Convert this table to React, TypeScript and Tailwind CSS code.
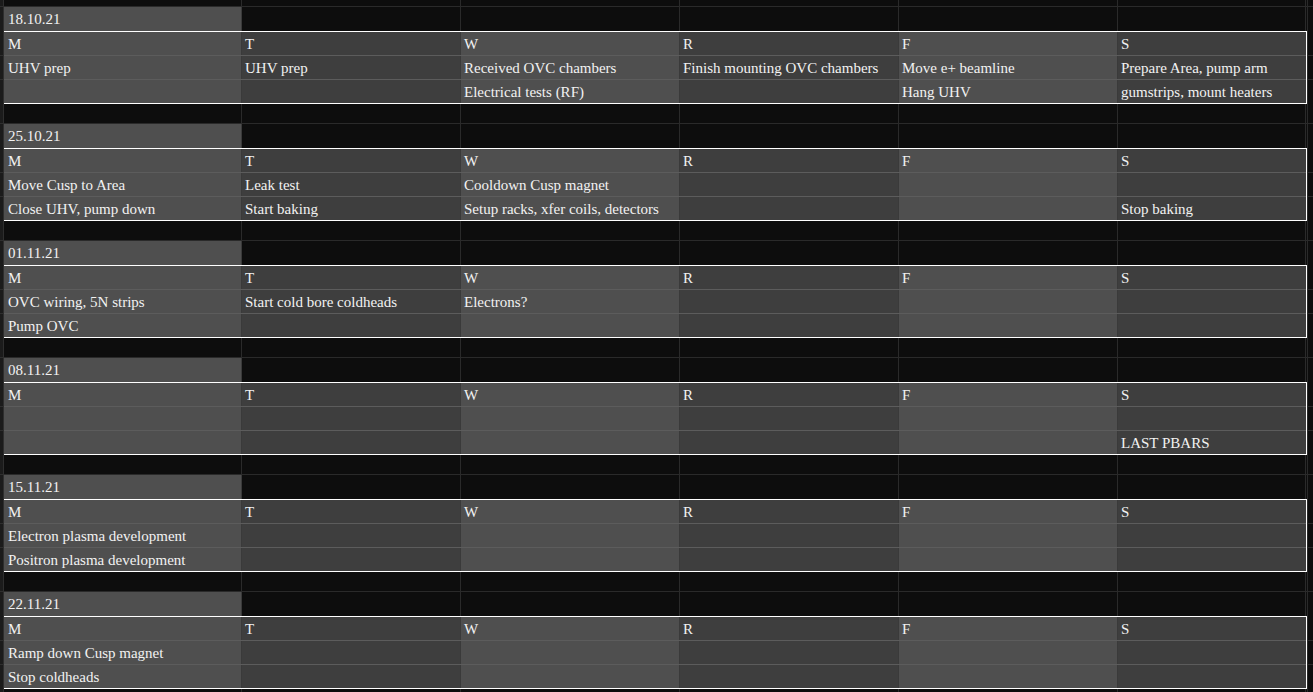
const COL_W = ["w-[238px]", "w-[219px]", "w-[219px]", "w-[219px]", "w-[219px]", "w-[188px]"];
const DAYS = ["M", "T", "W", "R", "F", "S"];

type Week = { date: string; rows: string[][] };

const weeks: Week[] = [
  {
    date: "18.10.21",
    rows: [
      ["UHV prep", "UHV prep", "Received OVC chambers", "Finish mounting OVC chambers", "Move e+ beamline", "Prepare Area, pump arm"],
      ["", "", "Electrical tests (RF)", "", "Hang UHV", "gumstrips, mount heaters"],
    ],
  },
  {
    date: "25.10.21",
    rows: [
      ["Move Cusp to Area", "Leak test", "Cooldown Cusp magnet", "", "", ""],
      ["Close UHV, pump down", "Start baking", "Setup racks, xfer coils, detectors", "", "", "Stop baking"],
    ],
  },
  {
    date: "01.11.21",
    rows: [
      ["OVC wiring, 5N strips", "Start cold bore coldheads", "Electrons?", "", "", ""],
      ["Pump OVC", "", "", "", "", ""],
    ],
  },
  {
    date: "08.11.21",
    rows: [
      ["", "", "", "", "", ""],
      ["", "", "", "", "", "LAST PBARS"],
    ],
  },
  {
    date: "15.11.21",
    rows: [
      ["Electron plasma development", "", "", "", "", ""],
      ["Positron plasma development", "", "", "", "", ""],
    ],
  },
  {
    date: "22.11.21",
    rows: [
      ["Ramp down Cusp magnet", "", "", "", "", ""],
      ["Stop coldheads", "", "", "", "", ""],
    ],
  },
];

// plain black spreadsheet row (top strip and spacer rows)
const EmptyRow = ({ h }: { h: string }) => (
  <div className={`flex ${h}`}>
    <div className="w-[4px] shrink-0 bg-[#1b1b1b] border-r border-b border-[#2e2e2e]" />
    {COL_W.map((w, i) => (
      <div key={i} className={`${w} shrink-0 border-r border-b border-[#2a2a2a]`} />
    ))}
    <div className="w-[1px] shrink-0 border-b border-[#2a2a2a]" />
    <div className="flex-1 border-l border-b border-[#2a2a2a]" />
  </div>
);

const DateRow = ({ date }: { date: string }) => (
  <div className="flex h-[24px]">
    <div className="w-[4px] shrink-0 bg-[#1b1b1b] border-r border-[#2e2e2e]" />
    {COL_W.map((w, i) => (
      <div
        key={i}
        className={`${w} shrink-0 border-r ${i === 0 ? "bg-[#4f4f4f] border-[#3a3a3a] pl-[4px]" : "border-[#2a2a2a]"}`}
      >
        {i === 0 && date}
      </div>
    ))}
    <div className="w-[1px] shrink-0" />
    <div className="flex-1 border-l border-[#2a2a2a]" />
  </div>
);

const WeekBlock = ({ week }: { week: Week }) => {
  const rows = [DAYS, ...week.rows];
  return (
    <>
      <DateRow date={week.date} />
      <div className="flex">
        {/* left gutter */}
        <div className="w-[4px] shrink-0 bg-[#1b1b1b] border-r border-[#2e2e2e] flex flex-col">
          <div className="h-[25px] border-b border-[#2e2e2e]" />
          <div className="h-[24px] border-b border-[#2e2e2e]" />
          <div className="flex-1" />
        </div>

        {/* the outlined week */}
        <div className="w-[1303px] shrink-0 border-y border-r border-white">
          {rows.map((row, r) => (
            <div key={r} className={`flex ${r < 2 ? "h-[24px] border-b border-[#5c5c5c]" : "h-[23px]"}`}>
              {row.map((txt, c) => (
                <div
                  key={c}
                  className={`${COL_W[c]} shrink-0 whitespace-nowrap overflow-hidden ${c === 0 ? "pl-[4px]" : "pl-[3px]"} ${
                    c % 2 === 0 ? "bg-[#4f4f4f]" : "bg-[#3e3e3e]"
                  } ${c < 5 ? "border-r border-[#3a3a3a]" : ""}`}
                >
                  {txt}
                </div>
              ))}
            </div>
          ))}
        </div>

        {/* right filler */}
        <div className="flex-1 flex flex-col border-l border-[#2a2a2a]">
          <div className="h-[25px] border-b border-[#2a2a2a]" />
          <div className="h-[24px] border-b border-[#2a2a2a]" />
          <div className="flex-1" />
        </div>
      </div>
    </>
  );
};

export default function App() {
  return (
    <div
      className="min-h-screen w-full overflow-hidden bg-[#0d0d0d] text-[#f2f2f2] text-[15px] leading-[24px]"
      style={{ fontFamily: '"Liberation Serif", "Times New Roman", serif' }}
    >
      <EmptyRow h="h-[7px]" />
      {weeks.map((w, i) => (
        <div key={w.date}>
          <WeekBlock week={w} />
          {i < weeks.length - 1 && <EmptyRow h="h-[20px]" />}
        </div>
      ))}
      <EmptyRow h="h-[20px]" />
    </div>
  );
}
